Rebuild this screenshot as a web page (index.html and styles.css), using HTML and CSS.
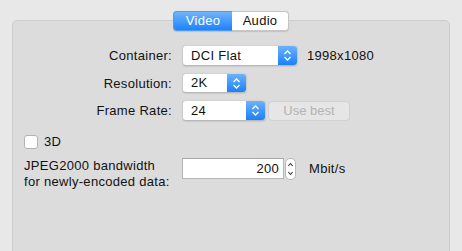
FILE: index.html
```html
<!DOCTYPE html>
<html lang="en">
<head>
  <meta charset="UTF-8">
  <title>Export Settings</title>
  <link rel="stylesheet" href="styles.css">
</head>
<body>

<div class="tabview">
  <div class="tabs">
    <span class="tab selected">Video</span>
    <span class="tab">Audio</span>
  </div>

  <div class="panel">
    <div class="form">
      <label class="label">Container:</label>
      <div class="control">
        <div class="popup wide">
          <span class="value">DCI Flat</span>
          <span class="arrows">
            <svg width="9" height="13" viewBox="0 0 9 13"><path d="M1.5 5 L4.5 2 L7.5 5 M1.5 8 L4.5 11 L7.5 8" fill="none" stroke="#fff" stroke-width="1.3"/></svg>
          </span>
        </div>
        <span class="info">1998x1080</span>
      </div>

      <label class="label">Resolution:</label>
      <div class="control">
        <div class="popup small">
          <span class="value">2K</span>
          <span class="arrows">
            <svg width="9" height="13" viewBox="0 0 9 13"><path d="M1.5 5 L4.5 2 L7.5 5 M1.5 8 L4.5 11 L7.5 8" fill="none" stroke="#fff" stroke-width="1.3"/></svg>
          </span>
        </div>
      </div>

      <label class="label">Frame Rate:</label>
      <div class="control tight">
        <div class="popup medium">
          <span class="value">24</span>
          <span class="arrows">
            <svg width="9" height="13" viewBox="0 0 9 13"><path d="M1.5 5 L4.5 2 L7.5 5 M1.5 8 L4.5 11 L7.5 8" fill="none" stroke="#fff" stroke-width="1.3"/></svg>
          </span>
        </div>
        <button class="button" disabled>Use best</button>
      </div>

      <div class="check-row">
        <span class="checkbox"></span>
        <span>3D</span>
      </div>

      <label class="label multi">JPEG2000 bandwidth<br>for newly-encoded data:</label>
      <div class="control top">
        <div class="field">200</div>
        <span class="stepper">
          <svg width="9" height="20" viewBox="0 0 9 20"><path d="M2.3 7 L4.5 4.5 L6.7 7 M2.3 13 L4.5 15.5 L6.7 13" fill="none" stroke="#333" stroke-width="1.1"/></svg>
        </span>
        <span class="unit">Mbit/s</span>
      </div>
    </div>
  </div>
</div>

</body>
</html>
```

FILE: styles.css
```css
html, body {
  margin: 0;
  height: 100%;
  overflow: hidden;
}

body {
  font-family: "Liberation Sans", Arial, sans-serif;
  font-size: 13px;
  letter-spacing: 0.3px;
  color: #111;
  background: #e8e8e8;
}

.tabview {
  padding: 11px 12px 0 12px;
}

.tabs {
  display: flex;
  justify-content: center;
  margin-bottom: -11px;
  position: relative;
  z-index: 1;
}

.tab {
  height: 18px;
  line-height: 18px;
  padding: 0 10px;
  background: #fff;
  border: 1px solid #c6c6c6;
  box-shadow: 0 0.5px 1px rgba(0,0,0,0.12);
  text-align: center;
}

.tab:first-child {
  border-radius: 4px 0 0 4px;
  border-right: none;
  width: 38px;
}

.tab:last-child {
  border-radius: 0 4px 4px 0;
  border-left: none;
  width: 36px;
}

.tab.selected {
  color: #fff;
  background: linear-gradient(#6fb4fb, #1d83fb);
  border-color: #4e9af5;
}

.panel {
  height: 240px;
  background: #dcdcdc;
  border: 1px solid #cdcdcd;
  border-radius: 5px 5px 0 0;
  padding: 24px 11px 0 11px;
  box-sizing: border-box;
}

.form {
  display: grid;
  grid-template-columns: 148px 1fr;
  column-gap: 10px;
  row-gap: 7px;
  align-items: center;
}

.label {
  text-align: right;
}

.label.multi {
  text-align: left;
  line-height: 16px;
  align-self: start;
}

.control {
  display: flex;
  align-items: center;
  gap: 9px;
}

.control.tight {
  gap: 2px;
}

.control.top {
  align-self: start;
  align-items: flex-start;
}

.popup {
  display: flex;
  height: 19px;
  background: #fff;
  border: 1px solid #c9c9c9;
  border-top-color: #d4d4d4;
  border-bottom-color: #b8b8b8;
  border-radius: 4px;
  overflow: hidden;
  box-shadow: 0 0.5px 1px rgba(0,0,0,0.08);
}

.popup.wide { width: 114px; }
.popup.small { width: 63px; height: 18px; }
.popup.medium { width: 82px; }

.popup .value {
  flex: 1;
  padding-left: 8px;
  line-height: 19px;
}

.popup.small .value {
  line-height: 18px;
}

.arrows {
  width: 19px;
  display: flex;
  align-items: center;
  justify-content: center;
  background: linear-gradient(#6cb2fb, #1a81fb);
}

.button {
  width: 82px;
  height: 20px;
  font: inherit;
  color: #b3b3b3;
  background: #e6e6e6;
  border: 1px solid #d0d0d0;
  border-radius: 4px;
  padding: 0;
}

.check-row {
  grid-column: 1 / 3;
  display: flex;
  align-items: center;
  gap: 6px;
  margin-top: 6px;
  margin-bottom: 2px;
}

.checkbox {
  width: 12px;
  height: 12px;
  background: #fff;
  border: 1px solid #b3b3b3;
  border-radius: 3px;
}

.field {
  width: 92px;
  height: 19px;
  line-height: 19px;
  padding: 0 4px;
  text-align: right;
  background: #fff;
  border: 1px solid #b5b5b5;
  border-top-color: #a8a8a8;
}

.stepper {
  display: flex;
  width: 9px;
  height: 20px;
  background: #fff;
  border: 0.5px solid #b9b9b9;
  border-radius: 5px;
  margin-left: -8px;
}

.unit {
  margin-left: 4px;
  line-height: 21px;
}
```
